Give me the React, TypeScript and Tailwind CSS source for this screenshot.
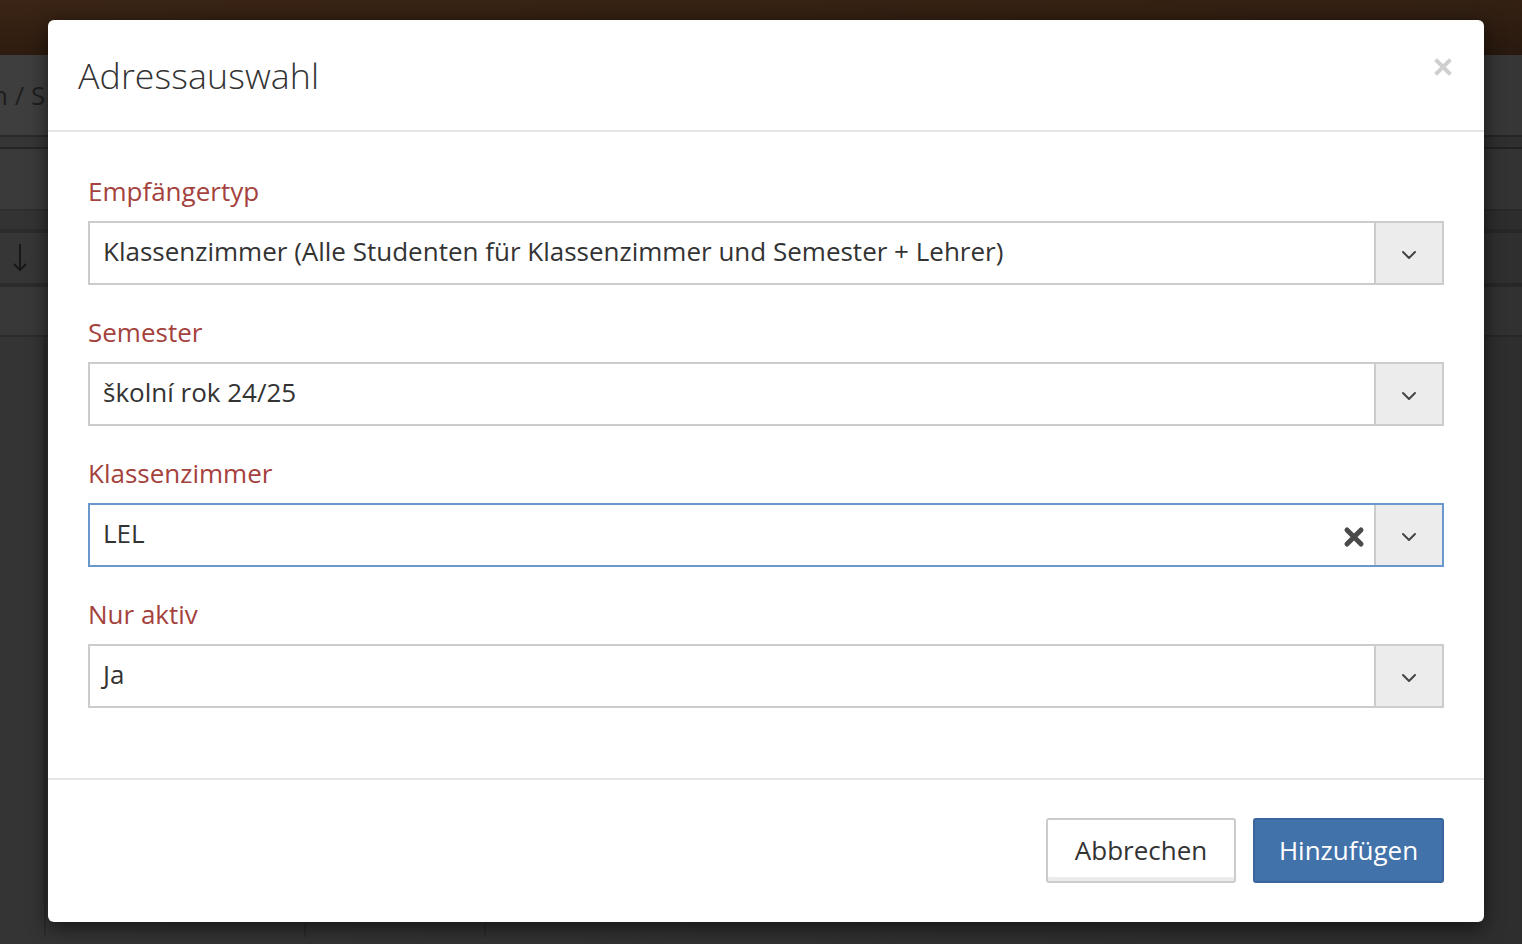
import React from "react";

function Chevron() {
  return (
    <svg width="16" height="10" viewBox="0 0 16 10" fill="none">
      <path d="M2 2 L8 8 L14 2" stroke="#444" strokeWidth="2" strokeLinecap="round" strokeLinejoin="round" />
    </svg>
  );
}

function Select({ value, focused, clearable }: { value: string; focused?: boolean; clearable?: boolean }) {
  return (
    <div
      className={
        "flex h-[64px] items-stretch border-2 bg-white " +
        (focused ? "border-[#6b98cc]" : "border-[#cccccc]")
      }
    >
      <div className="flex flex-1 items-center pb-[3px] pl-[13px] text-[26px] text-[#333]">{value}</div>
      {clearable && (
        <div className="flex w-[40px] items-center justify-center pt-[3px]">
          <svg width="22" height="22" viewBox="0 0 22 22">
            <path d="M4 4 L18 18 M18 4 L4 18" stroke="#4a4a4a" strokeWidth="5" strokeLinecap="round" />
          </svg>
        </div>
      )}
      <div className="flex w-[68px] items-center justify-center border-l-2 border-[#cccccc] bg-[#ececec] pt-[3px]">
        <Chevron />
      </div>
    </div>
  );
}

function Field({ label, children }: { label: string; children: React.ReactNode }) {
  return (
    <div className="mb-[29px]">
      <div className="mb-[12px] text-[26px] leading-[36px] text-[#a4423d]">{label}</div>
      {children}
    </div>
  );
}

export default function App() {
  return (
    <div
      className="relative h-[944px] w-[1522px] overflow-hidden bg-[#343434]"
      style={{ fontFamily: "'Open Sans', 'Noto Sans', sans-serif" }}
    >
      {/* background page (dimmed) */}
      <div className="h-[55px] bg-gradient-to-b from-[#3b2515] to-[#2e1c10]" />
      <div className="flex h-[82px] items-center border-b-2 border-[#2a2a2a] bg-[#3e3e3e]">
        <span className="ml-[-8px] text-[26px] text-[#1e1e1e]">n / S</span>
      </div>
      <div className="h-[12px] border-b-2 border-[#262626] bg-[#363636]" />
      <div className="h-[62px] border-b-2 border-[#2e2e2e] bg-[#3a3a3a]" />
      <div className="h-[18px] bg-[#333]" />
      <div className="flex h-[58px] items-center border-y-4 border-[#2c2c2c] bg-[#363636] pl-[12px]">
        <svg width="16" height="32" viewBox="0 0 16 32">
          <path d="M8 2 V28 M2 22 L8 28 L14 22" stroke="#181818" strokeWidth="2" fill="none" />
        </svg>
      </div>
      <div className="h-[50px] border-b-2 border-[#2c2c2c] bg-[#383838]" />
      <div className="flex h-[600px] bg-[#343434]">
        <div className="w-[46px] border-r-2 border-[#2c2c2c]" />
        <div className="w-[260px] border-r-2 border-[#2c2c2c]" />
        <div className="w-[180px] border-r-2 border-[#2c2c2c]" />
      </div>
      <div className="pointer-events-none absolute inset-0 bg-gradient-to-r from-[#00000000] via-[#00000010] to-[#00000020]" />

      {/* modal */}
      <div className="absolute left-[48px] top-[20px] w-[1436px] rounded-[6px] bg-white shadow-[0_5px_20px_rgba(0,0,0,0.6)]">
        <div className="flex h-[112px] items-center justify-between border-b-2 border-[#e5e5e5] pl-[30px] pr-[32px]">
          <h1 className="pt-[2px] text-[35.7px] font-light tracking-[0.1px] text-[#333]">Adressauswahl</h1>
          <svg width="18" height="18" viewBox="0 0 18 18" className="mb-[16px]">
            <path d="M3 3 L15 15 M15 3 L3 15" stroke="#cfcfcf" strokeWidth="4" strokeLinecap="square" />
          </svg>
        </div>
        <div className="px-[40px] pb-[41px] pt-[41px]">
          <Field label="Empfängertyp">
            <Select value="Klassenzimmer (Alle Studenten für Klassenzimmer und Semester + Lehrer)" />
          </Field>
          <Field label="Semester">
            <Select value="školní rok 24/25" />
          </Field>
          <Field label="Klassenzimmer">
            <Select value="LEL" focused clearable />
          </Field>
          <Field label="Nur aktiv">
            <Select value="Ja" />
          </Field>
        </div>
        <div className="flex justify-end gap-[17px] border-t-2 border-[#e5e5e5] px-[40px] pb-[39px] pt-[38px]">
          <button className="h-[65px] w-[190px] rounded-[3px] border-2 border-[#cccccc] bg-white text-[26px] text-[#333] shadow-[inset_0_-4px_0_#ececec]">
            Abbrechen
          </button>
          <button className="h-[65px] w-[191px] rounded-[3px] border-2 border-[#3a66a0] bg-[#4272aa] text-[26px] text-white">
            Hinzufügen
          </button>
        </div>
      </div>
    </div>
  );
}
